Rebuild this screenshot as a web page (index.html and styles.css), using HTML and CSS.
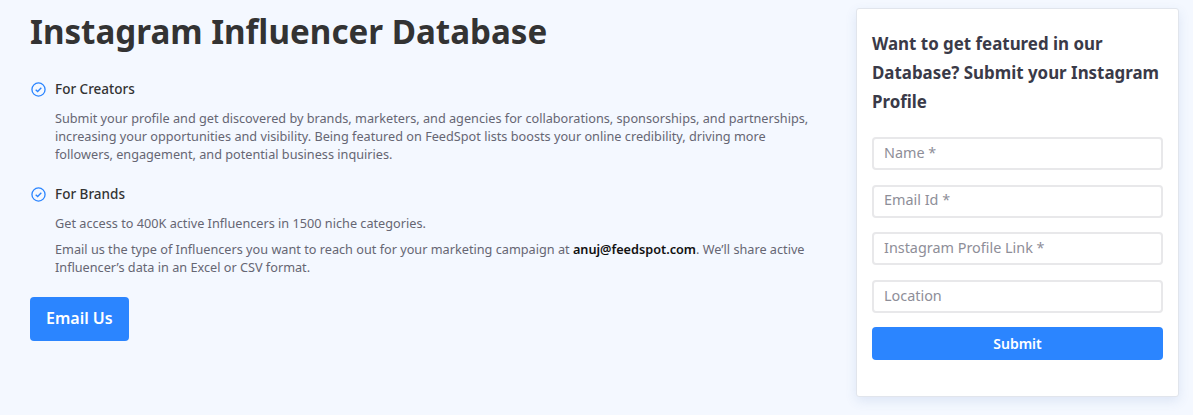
FILE: index.html
```html
<!doctype html>
<html>
<head>
  <link rel="stylesheet" href="styles.css">
</head>
<body>
  <div class="wrap">
    <div class="info">
      <h1 class="title">Instagram Influencer Database</h1>

      <div class="item">
        <h3 class="itemHead">
          <svg class="check" viewBox="0 0 16 16"><circle cx="8" cy="8" r="7"></circle><path d="M5 8.2l2.1 2 3.9-4.1"></path></svg>
          For Creators
        </h3>
        <p class="text">Submit your profile and get discovered by brands, marketers, and agencies for collaborations, sponsorships, and partnerships, increasing your opportunities and visibility. Being featured on FeedSpot lists boosts your online credibility, driving more followers, engagement, and potential business inquiries.</p>
      </div>

      <div class="item">
        <h3 class="itemHead">
          <svg class="check" viewBox="0 0 16 16"><circle cx="8" cy="8" r="7"></circle><path d="M5 8.2l2.1 2 3.9-4.1"></path></svg>
          For Brands
        </h3>
        <p class="text">Get access to 400K active Influencers in 1500 niche categories.</p>
        <p class="text">Email us the type of Influencers you want to reach out for your marketing campaign at <strong>anuj@feedspot.com</strong>. We’ll share active Influencer’s data in an Excel or CSV format.</p>
      </div>

      <a class="emailBtn" href="#">Email Us</a>
    </div>

    <form class="card">
      <h2 class="cardTitle">Want to get featured in our Database? Submit your Instagram Profile</h2>
      <input class="field" type="text" placeholder="Name *">
      <input class="field" type="text" placeholder="Email Id *">
      <input class="field" type="text" placeholder="Instagram Profile Link *">
      <input class="field" type="text" placeholder="Location">
      <button class="submit" type="button">Submit</button>
    </form>
  </div>
</body>
</html>
```

FILE: styles.css
```css
body{
  margin: 0;
  background-color: #f4f8ff;
  font-family: "Noto Sans", "Open Sans", sans-serif;
  color: #333333;
}
.wrap{
  display: flex;
  justify-content: space-between;
  align-items: flex-start;
  height: 415px;
  box-sizing: border-box;
  padding: 7px 14px 0 30px;
}
.info{
  width: 785px;
}
.title{
  margin: 0 0 22px 0;
  font-size: 33.15px;
  line-height: 50px;
  font-weight: 700;
  color: #333333;
}
.item{
  margin-bottom: 21px;
}
.itemHead{
  display: flex;
  align-items: center;
  gap: 9px;
  margin: 0 0 10px 0;
  padding-left: 1px;
  font-size: 13.5px;
  line-height: 20px;
  font-weight: 500;
  color: #333333;
}
.check{
  width: 15px;
  height: 15px;
  fill: none;
  stroke: #2b85ff;
  stroke-width: 1.4;
}
.text{
  margin: 0 0 8px 25px;
  font-size: 12.7px;
  line-height: 18px;
  color: #666673;
}
.text strong{
  font-weight: 600;
  color: #111111;
}
.emailBtn{
  display: inline-block;
  padding: 0 16px;
  height: 44px;
  line-height: 42px;
  background-color: #2b85ff;
  border-radius: 4px;
  color: #ffffff;
  font-size: 16px;
  font-weight: 600;
  text-decoration: none;
}
.card{
  display: flex;
  flex-direction: column;
  box-sizing: border-box;
  width: 323px;
  height: 389px;
  margin-top: 1px;
  padding: 20px 15px 0 15px;
  background-color: #ffffff;
  border: 1px solid #e1e5ec;
  border-radius: 3px;
  box-shadow: 0 4px 12px rgba(60, 100, 170, 0.12);
}
.cardTitle{
  margin: 0 0 21px 0;
  font-size: 16.9px;
  line-height: 29px;
  font-weight: 700;
  color: #3a3a48;
}
.field{
  box-sizing: border-box;
  width: 100%;
  height: 33px;
  margin-bottom: 14.7px;
  padding: 0 10px 3px 10px;
  border: 2px solid #e8e8ea;
  border-radius: 4px;
  background: #ffffff;
  font-family: inherit;
  font-size: 14.4px;
}
.field::placeholder{
  color: #8e8e98;
}
.submit{
  height: 33px;
  margin-top: -1px;
  border: none;
  border-radius: 4px;
  background-color: #2b85ff;
  color: #ffffff;
  font-family: inherit;
  font-size: 14px;
  font-weight: 600;
}
```
